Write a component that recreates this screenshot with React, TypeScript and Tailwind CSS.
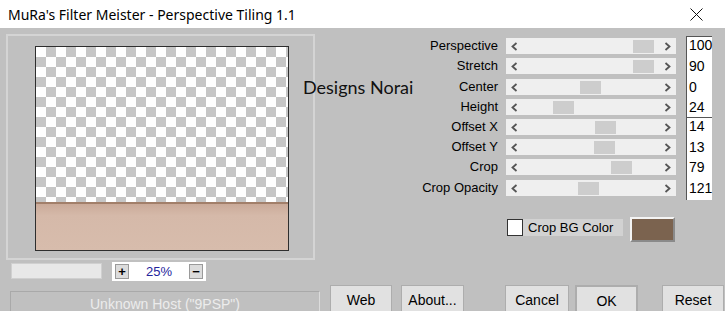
import React from "react"

const sliders = [
  { label: "Perspective", value: "100", thumb: 127, h: "h-[20px]" },
  { label: "Stretch", value: "90", thumb: 127, h: "h-[21px]" },
  { label: "Center", value: "0", thumb: 74, h: "h-[20px]" },
  { label: "Height", value: "24", thumb: 47, h: "h-[20px]" },
  { label: "Offset X", value: "14", thumb: 89, h: "h-[20px]" },
  { label: "Offset Y", value: "13", thumb: 88, h: "h-[20px]" },
  { label: "Crop", value: "79", thumb: 105, h: "h-[21px]" },
  { label: "Crop Opacity", value: "121", thumb: 72, h: "h-[20px]" },
]

function Chevron({ dir }: { dir: "left" | "right" }) {
  return (
    <svg width="7" height="9" viewBox="0 0 7 9" className="shrink-0">
      {dir === "left" ? (
        <polyline points="5.5,1 1.5,4.5 5.5,8" fill="none" stroke="#555" strokeWidth="1.8" />
      ) : (
        <polyline points="1.5,1 5.5,4.5 1.5,8" fill="none" stroke="#555" strokeWidth="1.8" />
      )}
    </svg>
  )
}

function SliderRow({ label, value, thumb, h, first }: { label: string; value: string; thumb: number; h: string; first: boolean }) {
  return (
    <div className={`flex items-start ${h}`}>
      <div className="w-[178px] text-right text-[13px] leading-[16px] text-black">{label}</div>
      <div className="relative ml-[8px] w-[170px] h-[16px] bg-[#efefef] flex items-center justify-between px-[5px]">
        <Chevron dir="left" />
        <div className="absolute top-[1.5px] h-[13px] w-[21px] bg-[#cdcdcd]" style={{ left: thumb }} />
        <Chevron dir="right" />
      </div>
      <div
        className={`ml-[10px] w-[26px] self-stretch bg-white border-l border-[#555] ${first ? "border-t -mt-[2px]" : ""} text-[14px] leading-[16px] pl-[2px] text-black`}
      >
        {value}
      </div>
    </div>
  )
}

function Button({ label, className = "" }: { label: string; className?: string }) {
  return (
    <div className={`h-[32px] bg-[#e1e1e1] border border-[#adadad] flex justify-center pt-[5px] text-[14px] leading-[18px] text-black ${className}`}>
      {label}
    </div>
  )
}

export default function App() {
  return (
    <div className="w-[725px] h-[311px] overflow-hidden flex flex-col font-['Liberation_Sans',Arial,sans-serif]">
      {/* title bar */}
      <div className="h-[28px] shrink-0 bg-white flex items-center justify-between pl-[8px] pr-[22px]">
        <span className="font-['Noto_Sans',sans-serif] text-[14px] text-black">MuRa's Filter Meister - Perspective Tiling 1.1</span>
        <svg width="13" height="13" viewBox="0 0 13 13">
          <path d="M0.5 0.5 L12.5 12.5 M12.5 0.5 L0.5 12.5" stroke="#111" strokeWidth="1" />
        </svg>
      </div>

      <div className="relative flex-1 bg-[#c0c0c0] flex">
        {/* left: preview */}
        <div className="w-[320px] shrink-0 flex flex-col pt-[6px]">
          <div className="ml-[6px] w-[309px] h-[226px] border-2 border-[#d4d4d4] pl-[27px] pt-[10px]">
            <div className="w-[254px] h-[205px] border border-[#2e2e2e] flex flex-col">
              <div className="h-[155px] bg-[conic-gradient(#c6c6c6_25%,#ffffff_0_50%,#c6c6c6_0_75%,#ffffff_0)] bg-[length:20px_20px]" />
              <div className="h-[2px] bg-[#a27f6a]" />
              <div className="flex-1 bg-[linear-gradient(#caaa99,#d5b9a9_25%,#d7bcac)]" />
            </div>
          </div>
          <div className="flex items-start mt-[2px]">
            <div className="ml-[11px] mt-[1px] w-[91px] h-[16px] bg-[#e8e8e8] border border-[#d0d0d0]" />
            <div className="ml-[10px] w-[94px] h-[19px] bg-white flex items-center px-[3px]">
              <div className="w-[14px] h-[15px] bg-[#dcdcdc] border border-[#9a9a9a] flex items-center justify-center text-[13px] font-bold leading-none">+</div>
              <div className="flex-1 text-center text-[13px] text-[#24249c] leading-none">25%</div>
              <div className="w-[14px] h-[15px] bg-[#dcdcdc] border border-[#9a9a9a] flex items-center justify-center text-[13px] font-bold leading-none">−</div>
            </div>
          </div>
          <div className="ml-[10px] mt-[10px] w-[310px] h-[26px] border-t border-l border-[#a9a9a9] border-r border-r-[#dcdcdc] text-center text-[14px] leading-[24px] text-[#ececec]">
            Unknown Host ("9PSP")
          </div>
        </div>

        {/* right: controls */}
        <div className="flex-1 flex flex-col pt-[10px]">
          {sliders.map((s, i) => (
            <SliderRow key={s.label} {...s} first={i === 0 || i === 4} />
          ))}
          <div className="flex items-start mt-[17px] ml-[187px]">
            <div className="mt-[2px] w-[16px] h-[17px] bg-white border border-[#333]" />
            <div className="mt-[2px] w-[100px] h-[17px] bg-[#d2d2d2] text-[13px] leading-[17px] pl-[5px] text-black">Crop BG Color</div>
            <div className="ml-[7px] w-[45px] h-[25px] bg-[#7b634f] border-2 border-t-[#f4f4f4] border-l-[#f4f4f4] border-r-[#8a8a8a] border-b-[#8a8a8a]" />
          </div>
          <div className="flex items-start mt-[43px]">
            <Button label="Web" className="ml-[10px] w-[62px]" />
            <Button label="About..." className="ml-[9px] w-[63px]" />
            <Button label="Cancel" className="ml-[41px] w-[64px]" />
            <Button label="OK" className="ml-[6px] w-[63px] border-2 border-[#0078d7] pt-[4px]" />
            <Button label="Reset" className="ml-[24px] w-[62px]" />
          </div>
        </div>

        {/* watermark over the panel edge */}
        <div className="absolute left-[303px] top-[49px] font-['Lato',sans-serif] text-[18px] leading-[20px] text-[#111]">Designs Norai</div>
      </div>
    </div>
  )
}
